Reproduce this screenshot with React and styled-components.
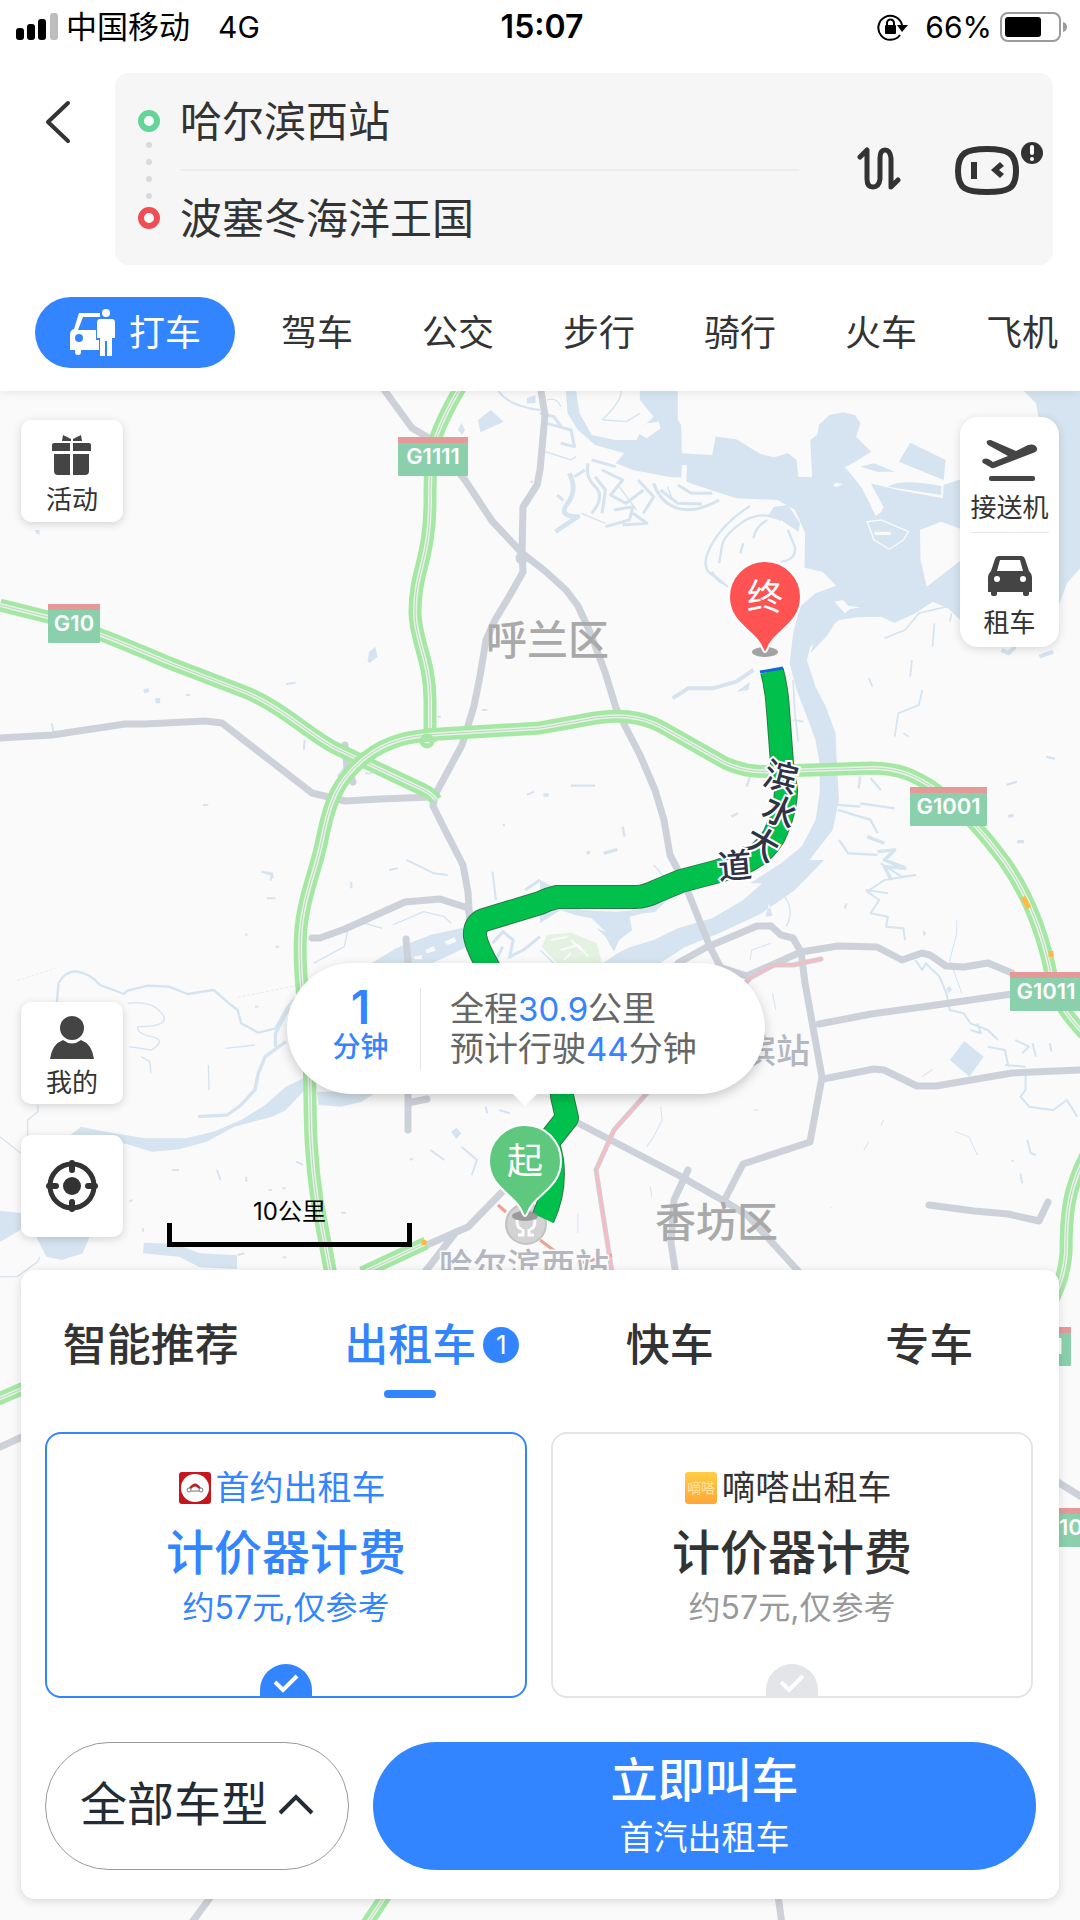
import React, { useState } from "react";
import styled, { createGlobalStyle } from "styled-components";

const modes = ["驾车", "公交", "步行", "骑行", "火车", "飞机"];
const carTabs = [
  { name: "智能推荐" },
  { name: "出租车", count: 1 },
  { name: "快车" },
  { name: "专车" },
];
const offers = [
  { id: "shouyue", name: "首约出租车", price: "计价器计费", note: "约57元,仅参考" },
  { id: "dida", name: "嘀嗒出租车", price: "计价器计费", note: "约57元,仅参考" },
];

const greyRoads = [
  "M385 391L412 428L432 440L465 480L492 521L522 553L545 571L566 590L578 606L590 632L605 672L616 708L626 728L640 755L655 790L664 820L670 855L680 874L688 892L710 947L722 970",
  "M541 391L545 415L540 470L537 485L523 507L522 553L523 572L510 595L495 620L486 640L480 676L474 706L462 745L435 795L433 806L444 828L463 865L468 892L470 925",
  "M0 738L52 735L125 724L145 724L205 721L222 723L245 741L312 793L345 801L380 799L433 797",
  "M312 938L320 938L345 929L405 902L440 899L468 908L472 925",
  "M406 939L409 975M408 1090V1130M408 1103L427 1099",
  "M678 963L705 948L757 926L771 926L781 935L793 938L801 952L805 983L822 1077L810 1142L743 1164L724 1201",
  "M719 967L747 976L801 952L838 946L877 947L902 960L922 953L930 955L946 966L964 967L988 963L1012 973",
  "M819 1024L871 1014L929 1006L1012 994",
  "M823 1079L874 1069L884 1070L917 1086L936 1086L1012 1073L1080 1070",
  "M578 1123L678 1175L724 1201L747 1215L800 1273",
  "M688 1170L674 1200L671 1243L676 1275",
  "M929 1205L974 1211L1008 1214L1039 1221L1048 1202",
  "M504 1190L468 1227L454 1233L427 1245M456 1232L425 1272",
  "M345 745L347 768L353 782",
  "M0 1447L24 1436M1056 1481L1080 1496M212 1895L190 1925M778 1895L782 1925",
];
const highways = [
  "M460 388Q444 415 436 437C430 460 430 480 430 500C430 560 415 570 415 612C415 640 430 660 430 700V742",
  "M0 605L48 617C80 624 150 655 172 664L245 692C280 706 310 735 335 748L424 790Q432 794 436 800",
  "M331 1275L317 1200C308 1140 311 1100 309 1060C306 1020 296 960 302 920C306 890 316 870 322 840C330 800 338 780 365 758C390 738 415 736 440 734L540 728L595 718C630 713 650 720 667 730L725 763C745 772 760 772 780 771L871 768C905 768 920 780 929 785C960 805 985 835 1005 862C1035 905 1047 950 1053 985C1058 1005 1070 1018 1084 1034",
  "M1086 1155C1068 1190 1066 1215 1066 1253Q1064 1280 1050 1305",
  "M426 1243L362 1273M-4 1400L24 1388M386 1895L366 1925",
];

const ROUTE =
  "M772 671Q777 690 778 710L782 763L786 790Q786 810 774 836Q762 856 740 864L719 871L681 881L657 891Q645 897 636 897H557Q548 899 540 903L484 920Q474 924 475 936Q477 948 490 970L562 1080V1096L567 1118L548 1142L552 1160Q556 1190 543 1218";

function RoadSign({ x, y, w, code }) {
  return (
    <g>
      <rect x={x} y={y} width={w} height="39" rx="1" fill="#8bd0ac" />
      <rect x={x} y={y} width={w} height="6" fill="#e59a9a" />
      <text x={x + w / 2} y={y + 27} className="sign" textAnchor="middle">
        {code}
      </text>
    </g>
  );
}

function Pin({ x, y, color, text }) {
  return (
    <g transform={`translate(${x} ${y})`}>
      <ellipse cx="0" cy="55" rx="13" ry="5" fill="#8d8d8d" opacity="0.8" />
      <path
        d="M0 -36A36 36 0 0 1 36 0C36 28 8 34 2 53Q0 57 -2 53C-8 34 -36 28 -36 0A36 36 0 0 1 0 -36Z"
        fill={color}
        stroke="#fff"
        strokeWidth="2"
      />
      <text className="pin" y="13" textAnchor="middle">
        {text}
      </text>
    </g>
  );
}

function MapCanvas() {
  return (
    <MapSvg viewBox="0 391 1080 1529" preserveAspectRatio="xMidYMin slice" aria-hidden="true">
      {/* lakes and rivers, north east */}
      <g transform="translate(540 380) scale(.3444 .3333)" fill="#d5e4f0">
        <path d="M290 33L400 33L400 120L410 135L412 220L500 225L510 170L570 178L640 222L680 232L720 220L745 240L750 290L790 292L785 180L805 165L810 135L840 105L880 97L915 105L930 130L918 170L962 215L915 245L885 262L905 285L935 325L960 375L985 400L998 382L960 310L1040 330L1170 355L1172 315L1230 295L1230 450L1165 425L1103 450L1105 540L1123 620L1230 535L1230 730L1185 685L1140 665L1090 700L1030 728L990 710L920 712L870 720L835 745L785 800L775 840L800 920L830 980L858 1060L862 1150L868 1260L850 1350L790 1430L740 1510L610 1510L700 1450L760 1400L800 1320L812 1240L812 1150L800 1080L775 1010L745 930L725 850L735 760L755 680L800 640L860 617L820 575L768 563L770 460L740 390L690 360L570 355L480 325L425 305L427 255L412 255L410 292L380 292L270 270L220 250L245 220L160 195L110 150L80 100L75 33L105 33L115 100L150 165L220 180L280 180L300 140L330 110L290 60Z" />
        <path d="M1405 33L1440 70L1450 120L1220 290V725L1508 672L1530 610L1568 565V33Z" />
        <path d="M1075 188L1178 240L1172 300L1042 245Z" />
        <path d="M680 380L720 375L755 430L750 455L700 420L660 410Z" />
        <path d="M785 820L800 770L840 700L880 690L835 765Z" />
        <path d="M570 935L610 905L605 930Z" />
        <path d="M935 245L1040 260L1050 285L1100 290L1165 318L1165 345L1010 322L960 310L915 285Z" fill="#fafafa" />
        <path d="M1010 320Q1050 295 1165 318V345Z M930 260L970 250L1030 275L980 275Z" />
        <path d="M855 665L880 660L895 678L930 682L900 688L885 700ZM285 160L310 130L345 125L350 145L310 175ZM960 378L985 380L992 395L975 408ZM850 315L860 308L880 312L860 322Z" fill="#fafafa" />
        <path d="M950 425L990 420L1070 455L1055 480L1015 508L970 480Z" stroke="#fafafa" strokeWidth="4" />
        <path d="M975 460H1000M1005 460H1015" stroke="#fafafa" strokeWidth="10" strokeLinecap="round" />
        <g fill="none" stroke="#d5e4f0" strokeWidth="7" strokeLinejoin="round">
          <path d="M610 378Q530 430 495 500T510 590L545 620M700 420Q640 390 590 425T530 490L520 550M660 420Q625 440 620 475M590 490L582 520M700 545Q745 540 740 500L720 450M500 575Q510 600 530 610" />
          <path d="M620 870L570 905L500 925L430 925L385 955" strokeWidth="12" />
          <path d="M85 280Q110 330 80 370T110 410L45 455" strokeWidth="14" />
          <path d="M140 250Q130 290 160 320T150 400M180 270L240 300L205 345L250 370L300 330M215 390L270 380L260 420L190 440M330 310Q350 370 400 385T520 360M400 315L440 340L500 340M270 400L310 430L240 435M60 190L100 200L90 150L20 130M0 100L40 110L65 145M150 240L220 260M50 345L68 362M160 290L190 330L180 400M285 300L330 350L300 400M350 330L400 370L470 372M100 290L130 270" strokeWidth="9" />
          <path d="M20 60Q50 50 60 80M180 120Q240 60 235 33M185 120L250 125L290 100M0 210L90 240L105 230M120 400L190 430M230 320L280 390M370 320L385 360" strokeWidth="4" />
          <path d="M1195 700L1190 725M1000 775L1060 750L1100 700L1180 680M1110 930L1100 975L1040 1000L1030 1070M1080 840L1075 890M1145 730L1140 800M1055 1060L1070 1070M955 895L965 920M735 900L740 1000L750 1085M735 1020L765 1025" strokeWidth="5" />
          <path d="M865 1275L930 1280M930 1190L925 1225M960 1195L990 1230M865 1290L960 1320L980 1360M868 1380L895 1420L980 1425M1355 1215L1385 1205M1470 1130L1495 1137M90 1217H160M555 1310L575 1300M600 1220L610 1190M240 1340L245 1370M930 1270L1030 1285" strokeWidth="7" />
          <path d="M980 1415L1030 1410L1000 1440L1060 1465L1000 1460L1020 1500M950 1370L1000 1390M1360 1310L1375 1305M1385 1385H1405M185 1420L225 1408M135 1418H145M10 1245H25" strokeWidth="10" />
          <path d="M1340 810L1360 820L1380 800M1450 830L1490 815" strokeWidth="12" />
        </g>
      </g>
      {/* streams, north west */}
      <g transform="translate(0 380) scale(.3444 .3333)" fill="#d5e4f0">
        <path d="M1388 120L1425 90L1462 125L1395 157ZM1330 150L1340 128L1350 150L1342 165ZM1067 845L1072 815L1090 800L1096 830L1075 848ZM102 450H115V465L104 460ZM415 930L430 924L435 935L420 940ZM450 955H465V970H452ZM1530 55L1555 45V70H1530Z" />
        <path d="M1447 33Q1480 80 1568 90M830 912L858 908M885 1080L882 1110M590 1275H605M150 1030L155 1055M1400 990H1415M1060 1180H1080M980 1190L1010 1150M760 1475L790 1480L792 1495M1130 1470L1155 1465M1530 1245L1550 1235M1460 1335H1466M1270 1010H1280M1180 1440L1260 1480L1300 1485M540 945H552M1540 305H1548" fill="none" stroke="#d5e4f0" strokeWidth="6" />
      </g>
      {/* Songhua river, west */}
      <g transform="translate(0 860) scale(.3444 .3333)" fill="#d5e4f0">
        <path d="M1075 312L1150 265L1250 225L1345 203L1355 262L1250 312Z" />
        <path d="M205 825L235 800L290 812L420 835L540 835L620 815L700 780L770 735L830 680L890 650L890 685L830 750L790 770L680 800L600 845L520 868L440 875L360 850L300 840Z" />
        <path d="M0 1052L65 1060L60 1110L0 1145ZM105 1130H260L240 1180L180 1200L135 1190ZM418 1148L510 1152L580 1180L688 1186V1227L580 1222L520 1190L415 1180ZM920 695H1095L1050 725L990 740L925 735ZM1310 815L1325 803L1340 820L1325 838Z" />
        <path d="M1235 270L1260 258L1265 272L1240 280ZM1290 245L1320 232L1325 245L1300 255ZM1200 290L1225 285V298H1205Z" fill="#fafafa" />
        <g fill="none" stroke="#d5e4f0" strokeWidth="7" strokeLinejoin="round">
          <path d="M165 428L170 370Q190 330 225 335T290 375L360 402L370 392L430 377L490 380L545 402L620 390L665 430L690 450L700 490L750 518L800 505L835 440L860 410" />
          <path d="M830 545L770 590L750 640L740 690L700 735L660 765L575 770M840 440L800 520V560" strokeWidth="10" />
          <path d="M80 830V780L110 755V735M0 830L60 880M0 1250L50 1250L110 1205L115 1190M910 310L1000 260L1010 210L1060 190L1110 205M1140 195L1230 155L1290 170L1310 190M655 565L740 555M410 590L435 605L438 640M605 615L607 690M370 430Q440 420 470 460T400 500Q395 520 440 530T440 570L375 560" strokeWidth="4" />
          <path d="M760 35L790 45L785 62M775 115H800M715 220V228M800 260H810M740 440H750M860 905L880 915M820 985H830M780 990H790M715 950V965M500 930H520M630 930L640 960M990 1058H1005M415 1105V1115M820 1192H832M690 1185L710 1180M1410 740L1415 760M1450 750L1480 760M1250 870L1290 900M1340 860L1385 900L1370 945M1190 900L1200 895M375 1025L385 1020M1430 35L1440 120M1020 65V85" strokeWidth="6" />
          <path d="M50 362L160 325M690 412L870 375" strokeWidth="2" strokeDasharray="9 5" />
        </g>
        <g fill="none" stroke="#d5e4f0" strokeWidth="9">
          <path d="M1430 250L1460 215L1490 240L1480 290L1520 270L1568 230M1525 90L1568 60M1440 300L1460 260" />
        </g>
      </g>
      {/* Songhua river, east */}
      <g transform="translate(540 860) scale(.3444 .3333)" fill="#d5e4f0">
        <path d="M5 260L20 225L90 218L165 250L180 310H50Z" fill="#e3f2e1" />
        <path d="M30 240L80 230M60 270L110 255L140 290M90 240L120 270M70 300L90 280" fill="none" stroke="#fafafa" strokeWidth="6" />
        <path d="M740 0L700 45L650 65L590 120L500 175L400 205L330 240L260 262L225 280L180 312H345L420 262L520 220L640 162L740 90L825 0ZM655 170L665 130L675 168ZM1232 543L1288 590L1247 650L1190 600ZM1180 385L1190 378L1196 390L1186 400ZM1110 210L1122 218L1115 230Z" />
        <path d="M0 60L60 90L120 150L220 155L280 150L390 100L330 160L230 240L215 275L190 230L140 180L60 150L0 190Z" />
        <path d="M260 170L300 160L340 155L270 225ZM100 165L150 175L190 215L130 190ZM30 170L90 160L110 200L60 200Z" fill="#fafafa" />
        <g fill="none" stroke="#d5e4f0" strokeWidth="6" strokeLinejoin="round">
          <path d="M710 110Q740 150 715 200M0 270L40 310M330 15L360 50" strokeWidth="4" />
          <path d="M990 10L1050 50L1090 45L1000 60L950 95L985 120L960 160L1010 170L1005 200L1055 205L1060 240M945 90L1010 100M1000 0L1060 20M1090 300L1110 330L1120 310L1160 350L1180 400L1190 450L1230 460L1250 490L1300 510L1330 540M1250 510L1280 520L1270 490M1300 560L1350 570L1360 620M1350 615L1410 620M1410 640V690L1395 710L1420 740L1450 745L1490 750L1530 720L1560 770M1380 540L1420 560L1400 580M1430 550L1440 590M1480 550L1485 575M890 130L885 145M1415 840L1425 880L1440 885M1370 905L1375 900M1395 940L1400 970" />
          <path d="M350 740L355 780L330 830L310 860M620 750H635M940 870L955 845M990 795L998 780M1110 650L1140 628M1205 815L1245 830L1270 885M675 400L685 450M320 980L325 1010M110 1060V1120M610 300L615 270L670 250M1210 180V220L1190 300L1225 400M845 1045V1040" strokeWidth="3" />
        </g>
      </g>

      <g fill="none" stroke="#cdd1d9" strokeWidth="7" strokeLinejoin="round" strokeLinecap="round">
        {greyRoads.map((d) => (
          <path key={d} d={d} />
        ))}
        <path d="M821 959L793 965H774L750 978L647 1093L614 1130L596 1170L612 1272" strokeWidth="5" />
        <path d="M821 959L793 965H774L750 978L647 1093L614 1130L596 1170L612 1272" stroke="#f6bcc3" strokeWidth="3" />
        <circle cx="522" cy="558" r="3" />
      </g>
      <path d="M498 1205L506 1212M540 1240L556 1252M577 1264L612 1255" stroke="#eaa48e" strokeWidth="3" fill="none" />
      {highways.map((d) => (
        <g key={d} fill="none">
          <path d={d} stroke="#a4e8a4" strokeWidth="13" />
          <path d={d} stroke="#e4f4e4" strokeWidth="4" />
          <path d={d} stroke="#c3cfc6" strokeWidth="1" />
        </g>
      ))}
      <circle cx="427" cy="741" r="5" fill="none" stroke="#a4e8a4" strokeWidth="5" />
      <path d="M1023 897L1029 908M1051 951V957M424 1240V1245" stroke="#ffba45" strokeWidth="5" />

      <text className="district" x="486" y="655">呼兰区</text>
      <text className="district" x="655" y="1237">香坊区</text>
      <text className="station" x="810" y="1063" textAnchor="end">滨站</text>
      <text className="station" x="439" y="1278">哈尔滨西站</text>
      <g transform="translate(526 1224)">
        <circle r="20" fill="#d3d3d3" stroke="#c2c2c2" strokeWidth="2" />
        <path d="M-9 -4Q-9 5 -4 5M9 -4Q9 5 4 5M-3 5V11H-8M3 5V11H8" fill="none" stroke="#fff" strokeWidth="3" />
      </g>

      <path d={ROUTE} fill="none" stroke="#2b7a45" strokeWidth="24" strokeLinejoin="round" />
      <path d={ROUTE} fill="none" stroke="#02c04c" strokeWidth="22" strokeLinejoin="round" />
      <path d="M760 672L783 668" stroke="#1565d8" strokeWidth="3" />
      <g className="road">
        <text transform="translate(781 777) rotate(15)" x="-17" y="12">滨</text>
        <text transform="translate(780 812) rotate(25)" x="-17" y="12">水</text>
        <text transform="translate(762 844) rotate(30)" x="-17" y="12">大</text>
        <text transform="translate(735 866) rotate(-5)" x="-17" y="12">道</text>
      </g>

      <RoadSign x={398} y={437} w={70} code="G1111" />
      <RoadSign x={48} y={604} w={52} code="G10" />
      <RoadSign x={910} y={787} w={77} code="G1001" />
      <RoadSign x={1010} y={972} w={72} code="G1011" />
      <RoadSign x={1001} y={1327} w={70} code="G1111" />
      <RoadSign x={1037} y={1508} w={70} code="G1011" />
      <Pin x={765} y={597} color="#ff5252" text="终" />
      <Pin x={525} y={1161} color="#5ec87e" text="起" />
    </MapSvg>
  );
}

function ShouyueLogo() {
  return (
    <svg width="32" height="32" viewBox="0 0 32 32" aria-hidden="true">
      <rect width="32" height="32" rx="3" fill="#c5161d" />
      <circle cx="16" cy="16" r="14" fill="#fff" />
      <path d="M10 16Q16 7 22 16L20 17Q16 12 12 17Z" fill="#b8252b" />
      <path d="M12 19H20" stroke="#777" strokeWidth="1" />
      <circle cx="10" cy="18" r="2" fill="#fff" stroke="#777" />
      <circle cx="22" cy="18" r="2" fill="#fff" stroke="#777" />
    </svg>
  );
}

function DidaLogo() {
  return (
    <svg width="32" height="32" viewBox="0 0 32 32" aria-hidden="true">
      <defs>
        <linearGradient id="dida" x1="0" y1="0" x2="0" y2="1">
          <stop offset="0" stopColor="#ffcd45" />
          <stop offset="1" stopColor="#ffa638" />
        </linearGradient>
      </defs>
      <rect width="32" height="32" rx="3" fill="url(#dida)" />
      <text x="16" y="21" textAnchor="middle" fontSize="14" fill="#ffe6a0">嘀嗒</text>
    </svg>
  );
}

export default function App() {
  const [carTab, setCarTab] = useState(1);
  const [offer, setOffer] = useState("shouyue");
  const [from, setFrom] = useState("哈尔滨西站");
  const [to, setTo] = useState("波塞冬海洋王国");

  const swap = () => {
    setFrom(to);
    setTo(from);
  };

  return (
    <Page>
      <GlobalStyle />
      <Header>
        <StatusBar>
          <StatusSide>
            <svg width="42" height="28" viewBox="0 0 42 28">
              <rect x="0" y="15" width="8" height="12" rx="3" />
              <rect x="11" y="11" width="8" height="16" rx="3" />
              <rect x="22" y="6" width="8" height="21" rx="3" />
              <rect x="34" y="0" width="8" height="27" rx="3" fill="#bdbdbd" />
            </svg>
            <Carrier>中国移动</Carrier>
            <span>4G</span>
          </StatusSide>
          <Clock>15:07</Clock>
          <StatusSide $end>
            <svg width="32" height="28" viewBox="0 0 32 28">
              <path d="M23 22A12 12 0 1 1 25 12" fill="none" stroke="#000" strokeWidth="2" />
              <path d="M20 12H31L25 19Z" />
              <rect x="8" y="12" width="11" height="9" rx="1" />
              <path d="M10 13V10A3 3 0 0 1 17 10V13" fill="none" stroke="#000" strokeWidth="2" />
            </svg>
            <Percent>66%</Percent>
            <svg width="68" height="30" viewBox="0 0 68 30">
              <rect x="1" y="1" width="59" height="28" rx="7" fill="none" stroke="#9b9b9b" strokeWidth="2" />
              <rect x="5" y="5" width="36" height="20" rx="3" />
              <path d="M63 10Q67 11 67 15T63 20Z" fill="#9b9b9b" />
            </svg>
          </StatusSide>
        </StatusBar>

        <SearchRow>
          <Back type="button" aria-label="返回">
            <svg width="28" height="44" viewBox="0 0 28 44">
              <path d="M25 3L5 22L25 41" />
            </svg>
          </Back>
          <SearchBox>
            <svg width="24" height="192" viewBox="0 0 24 192">
              <circle cx="12" cy="48" r="8" fill="#fff" stroke="#65d498" strokeWidth="6" />
              <circle cx="12" cy="145" r="8" fill="#fff" stroke="#ef4f54" strokeWidth="6" />
              <g fill="#dadada">
                <circle cx="12" cy="72" r="3" />
                <circle cx="12" cy="89" r="3" />
                <circle cx="12" cy="106" r="3" />
                <circle cx="12" cy="123" r="3" />
              </g>
            </svg>
            <Fields>
              <Field aria-label="起点" value={from} onChange={(e) => setFrom(e.target.value)} />
              <Field aria-label="终点" value={to} onChange={(e) => setTo(e.target.value)} />
            </Fields>
            <IconButton type="button" aria-label="交换起终点" onClick={swap}>
              <svg width="44" height="46" viewBox="0 0 44 46">
                <path
                  d="M3 11L10 4V33Q10 41 16 41T23 33V12Q23 4 28 4T34 12V41L41 34"
                  fill="none"
                  stroke="#333"
                  strokeWidth="5"
                  strokeLinecap="round"
                  strokeLinejoin="round"
                />
              </svg>
            </IconButton>
            <IconButton type="button" aria-label="语音助手">
              <svg width="92" height="60" viewBox="0 0 92 60">
                <path d="M33 10C54 10 62 14 62 32S54 53 33 53S4 50 4 32S12 10 33 10Z" fill="none" stroke="#333" strokeWidth="6" />
                <path d="M17 23H23V40H17Z" fill="#333" />
                <path d="M46 23L50 27L45 31L50 35L46 39L37 31Z" fill="#333" />
                <circle cx="78" cy="14" r="11" fill="#333" />
                <path d="M78 8V14" stroke="#fff" strokeWidth="4" strokeLinecap="round" />
                <circle cx="78" cy="20" r="2" fill="#fff" />
              </svg>
            </IconButton>
          </SearchBox>
        </SearchRow>

        <ModeNav>
          <ModeActive type="button">
            <svg width="48" height="48" viewBox="0 0 48 48" fill="#fff">
              <circle cx="37" cy="4" r="4" />
              <path d="M31 10H43Q46 10 46 14V29H43V47H38V32H36V47H31V29H28V14Q28 10 31 10Z" />
              <path d="M10 4H31V8H14L9 21H27V31H30V41H12V43Q12 46 9 46T6 43V41H1V26Q1 21 5 20Z" />
              <circle cx="10" cy="29" r="4" fill="#3385ff" />
            </svg>
            打车
          </ModeActive>
          {modes.map((m) => (
            <Mode key={m} type="button">
              {m}
            </Mode>
          ))}
        </ModeNav>
      </Header>

      <MapArea>
        <MapCanvas />
        <Bubble>
          <Wait>
            <b>1</b>
            <span>分钟</span>
          </Wait>
          <Trip>
            <p>
              全程<em>30.9</em>公里
            </p>
            <p>
              预计行驶<em>44</em>分钟
            </p>
          </Trip>
        </Bubble>

        <Overlay>
          <ToolColumn>
            <Tool type="button">
              <svg width="40" height="42" viewBox="0 0 40 42" fill="#444">
                <path d="M11 0L19 4V6H10ZM29 0L21 4V6H30ZM0 10Q0 8 2 8H18V16H0ZM21 8H37Q39 8 39 10V16H21ZM2 19H18V40H6Q2 40 2 36ZM21 19H37V36Q37 40 33 40H21Z" />
              </svg>
              活动
            </Tool>
            <ToolGroup>
              <Tool type="button">
                <svg width="46" height="44" viewBox="0 0 46 44" fill="#444">
                  <ellipse cx="23" cy="12" rx="12" ry="12" />
                  <path d="M1 43Q3 28 14 24Q23 31 32 24Q43 28 45 43Z" />
                </svg>
                我的
              </Tool>
              <LocateTool type="button" aria-label="定位">
                <svg width="52" height="52" viewBox="0 0 52 52">
                  <circle cx="26" cy="26" r="22" fill="none" stroke="#333" strokeWidth="5" />
                  <circle cx="26" cy="26" r="9" fill="#333" />
                  <path d="M26 3V10M26 42V49M3 26H10M42 26H49" stroke="#333" strokeWidth="6" strokeLinecap="round" />
                </svg>
              </LocateTool>
            </ToolGroup>
          </ToolColumn>
          <Scale>
            <span>10公里</span>
          </Scale>
          <RightPanel>
            <PanelButton type="button">
              <svg width="56" height="42" viewBox="0 0 56 42" fill="#444">
                <path d="M5 1Q8 -1 11 1L34 11L46 5Q53 3 55 8Q56 11 51 13L12 28Q10 29 8 27L1 23Q-1 20 2 19Q5 17 11 22L26 16L6 5Q4 3 5 1Z" />
                <rect x="7" y="36" width="46" height="5" rx="2" />
              </svg>
              接送机
            </PanelButton>
            <PanelButton type="button">
              <svg width="46" height="42" viewBox="0 0 46 42">
                <path d="M12 1H34Q37 1 38 4L42 16Q45 19 45 22V37H42V39Q42 41 39 41T36 39V37H10V39Q10 41 7 41T4 39V37H1V22Q1 19 4 16L8 4Q9 1 12 1Z" fill="#444" />
                <path d="M13 5H33L36 16H10Z" fill="#fff" />
                <circle cx="10" cy="24" r="3" fill="#fff" />
                <circle cx="36" cy="24" r="3" fill="#fff" />
              </svg>
              租车
            </PanelButton>
          </RightPanel>
        </Overlay>

        <Sheet>
          <CarTabs role="tablist">
            {carTabs.map((tab, i) => (
              <CarTab key={tab.name} type="button" role="tab" aria-selected={i === carTab} $active={i === carTab} onClick={() => setCarTab(i)}>
                <TabText>
                  {tab.name}
                  {tab.count && <Count>{tab.count}</Count>}
                </TabText>
              </CarTab>
            ))}
          </CarTabs>
          <Offers>
            {offers.map((o) => (
              <Offer key={o.id} $active={o.id === offer}>
                <input type="radio" name="offer" checked={o.id === offer} onChange={() => setOffer(o.id)} />
                <OfferName>
                  {o.id === "shouyue" ? <ShouyueLogo /> : <DidaLogo />}
                  {o.name}
                </OfferName>
                <OfferPrice>{o.price}</OfferPrice>
                <OfferNote $active={o.id === offer}>{o.note}</OfferNote>
                <Tick viewBox="0 0 52 32" $active={o.id === offer}>
                  <path d="M0 32V26A26 26 0 0 1 52 26V32Z" />
                  <path d="M15 18L23 26L37 12" fill="none" stroke="#fff" strokeWidth="4" />
                </Tick>
              </Offer>
            ))}
          </Offers>
          <Actions>
            <AllTypes type="button">
              全部车型
              <svg width="36" height="22" viewBox="0 0 36 22">
                <path d="M2 20L18 4L34 20" fill="none" stroke="#222b36" strokeWidth="4" />
              </svg>
            </AllTypes>
            <CallCar type="button">
              <strong>立即叫车</strong>
              <span>首汽出租车</span>
            </CallCar>
          </Actions>
        </Sheet>
      </MapArea>
    </Page>
  );
}

const GlobalStyle = createGlobalStyle`
  * {
    box-sizing: border-box;
  }
  body {
    margin: 0;
    background: #fff;
  }
  body, button, input {
    font-family: Inter, "Noto Sans CJK SC", sans-serif;
    color: #333;
  }
  button {
    border: 0;
    padding: 0;
    background: none;
    cursor: pointer;
  }
  svg {
    display: block;
    flex: none;
  }
`;

const Page = styled.div`
  display: flex;
  flex-direction: column;
  min-height: 100vh;
`;

const Header = styled.header`
  position: relative;
  z-index: 2;
  padding-bottom: 23px;
  background: #fff;
  box-shadow: 0 2px 8px rgba(0, 0, 0, 0.08);
`;

const StatusBar = styled.div`
  display: flex;
  align-items: center;
  height: 53px;
  padding: 0 12px 0 16px;
  color: #000;
  font-size: 30px;
  line-height: 32px;
`;

const StatusSide = styled.div`
  display: flex;
  flex: 1;
  align-items: center;
  justify-content: ${(p) => (p.$end ? "flex-end" : "flex-start")};
`;

const Carrier = styled.span`
  margin: 0 28px 0 8px;
  font-size: 31px;
`;

const Clock = styled.div`
  font-size: 32px;
  font-weight: 600;
`;

const Percent = styled.span`
  margin: 0 8px 0 16px;
`;

const SearchRow = styled.div`
  display: flex;
  align-items: flex-start;
  padding: 20px 27px 0 43px;
`;

const Back = styled.button`
  width: 72px;
  height: 98px;
  path {
    fill: none;
    stroke: #333;
    stroke-width: 4;
    stroke-linecap: round;
    stroke-linejoin: round;
  }
`;

const SearchBox = styled.div`
  display: flex;
  flex: 1;
  align-items: center;
  padding: 0 7px 0 22px;
  border-radius: 14px;
  background: #f6f6f6;
`;

const Fields = styled.div`
  display: flex;
  flex: 1;
  flex-direction: column;
  margin: 0 58px 0 19px;
`;

const Field = styled.input`
  width: 100%;
  height: 96px;
  padding: 0 0 6px;
  border: 0;
  outline: 0;
  background: none;
  font-size: 42px;
  & + & {
    border-top: 2px solid #ededed;
  }
`;

const IconButton = styled.button`
  & + & {
    margin-left: 53px;
  }
`;

const ModeNav = styled.nav`
  display: flex;
  align-items: center;
  justify-content: space-between;
  padding: 32px 22px 0 35px;
`;

const Mode = styled.button`
  font-size: 36px;
  line-height: 52px;
`;

const ModeActive = styled(Mode)`
  display: flex;
  align-items: center;
  justify-content: center;
  gap: 12px;
  width: 200px;
  height: 71px;
  margin-right: -23px;
  border-radius: 36px;
  background: #3385ff;
  color: #fff;
`;

const MapArea = styled.main`
  position: relative;
  display: flex;
  flex: 1;
  flex-direction: column;
  overflow: hidden;
  background: #fafafa;
`;

const MapSvg = styled.svg`
  position: absolute;
  inset: 0;
  width: 100%;
  height: 100%;
  .sign {
    fill: #fff;
    font-size: 22px;
    font-weight: 600;
  }
  .district {
    fill: #a9a9a9;
    font-size: 41px;
    font-weight: 500;
  }
  .station {
    fill: #b4b7bf;
    font-size: 34px;
    font-weight: 500;
    paint-order: stroke;
    stroke: #fafafa;
    stroke-width: 3px;
  }
  .road text {
    fill: #2e3348;
    font-size: 34px;
    font-weight: 500;
    paint-order: stroke;
    stroke: #fff;
    stroke-width: 4px;
  }
  .pin {
    fill: #fff;
    font-size: 36px;
  }
`;

const Bubble = styled.div`
  position: absolute;
  top: 572px;
  left: calc(50% - 253px);
  display: flex;
  align-items: center;
  width: 478px;
  height: 131px;
  border-radius: 66px;
  background: #fff;
  box-shadow: 0 4px 12px rgba(0, 0, 0, 0.2);
  &::after {
    content: "";
    position: absolute;
    top: 100%;
    left: 50%;
    margin-left: -13px;
    border: 12px solid transparent;
    border-top-color: #fff;
    border-bottom: 0;
  }
`;

const Wait = styled.div`
  display: flex;
  flex-direction: column;
  align-items: center;
  width: 134px;
  height: 82px;
  padding-left: 14px;
  border-right: 1px solid #e6e6e6;
  color: #3385ff;
  font-size: 28px;
  font-weight: 500;
  line-height: 42px;
  b {
    font-size: 46px;
    font-weight: 600;
    line-height: 38px;
  }
`;

const Trip = styled.div`
  padding-left: 29px;
  color: #666;
  font-size: 34px;
  line-height: 40px;
  white-space: nowrap;
  p {
    margin: 0;
  }
  em {
    color: #3385ff;
    font-size: 33px;
    font-style: normal;
  }
`;

const Overlay = styled.div`
  display: flex;
  flex: 1;
  padding: 29px 21px 33px;
`;

const ToolColumn = styled.div`
  position: relative;
  display: flex;
  flex-direction: column;
  justify-content: space-between;
`;

const ToolGroup = styled.div`
  display: grid;
  gap: 31px;
`;

const Tool = styled.button`
  display: flex;
  flex-direction: column;
  align-items: center;
  justify-content: center;
  gap: 7px;
  width: 102px;
  height: 102px;
  padding-top: 8px;
  border-radius: 10px;
  background: #fff;
  box-shadow: 0 2px 8px rgba(0, 0, 0, 0.16);
  font-size: 26px;
  line-height: 32px;
`;

const LocateTool = styled(Tool)`
  padding-top: 0;
`;

const Scale = styled.div`
  position: relative;
  align-self: flex-end;
  width: 245px;
  margin: 0 auto -10px 44px;
  border: solid #000;
  border-width: 0 5px 5px;
  height: 24px;
  span {
    position: absolute;
    bottom: 16px;
    left: 0;
    width: 100%;
    color: #000;
    font-size: 24px;
    line-height: 28px;
    text-align: center;
  }
`;

const RightPanel = styled.div`
  position: relative;
  display: flex;
  flex-direction: column;
  align-self: flex-start;
  width: 99px;
  height: 230px;
  margin-top: -3px;
  border-radius: 18px;
  background: #fff;
  box-shadow: 0 2px 10px rgba(0, 0, 0, 0.14);
`;

const PanelButton = styled.button`
  display: flex;
  flex: 1;
  flex-direction: column;
  align-items: center;
  justify-content: flex-end;
  gap: 10px;
  margin: 0 10px;
  padding-bottom: 8px;
  font-size: 26px;
  line-height: 32px;
  white-space: nowrap;
  & + & {
    border-top: 1px solid #e8e8e8;
  }
`;

const Sheet = styled.section`
  position: relative;
  margin: 0 21px 21px;
  padding-bottom: 29px;
  border-radius: 14px;
  background: #fff;
  box-shadow: 0 2px 10px rgba(0, 0, 0, 0.14);
`;

const CarTabs = styled.div`
  display: grid;
  grid-template-columns: repeat(4, 1fr);
`;

const CarTab = styled.button`
  display: flex;
  flex-direction: column;
  align-items: center;
  height: 162px;
  padding-top: 43px;
  color: ${(p) => (p.$active ? "#3385ff" : "#333")};
  font-size: 44px;
  font-weight: 500;
  line-height: 64px;
  &::after {
    content: "";
    width: 52px;
    height: 8px;
    margin-top: 13px;
    border-radius: 4px;
    background: ${(p) => (p.$active ? "#3385ff" : "transparent")};
  }
`;

const TabText = styled.span`
  position: relative;
`;

const Count = styled.span`
  position: absolute;
  top: 14px;
  left: 100%;
  width: 36px;
  height: 36px;
  margin-left: 7px;
  border-radius: 50%;
  background: #3385ff;
  color: #fff;
  font-size: 26px;
  font-weight: 400;
  line-height: 36px;
  text-align: center;
`;

const Offers = styled.div`
  display: grid;
  grid-template-columns: 1fr 1fr;
  gap: 24px;
  padding: 0 26px 0 24px;
`;

const Offer = styled.label`
  display: flex;
  flex-direction: column;
  align-items: center;
  padding-top: 34px;
  border: 2px solid ${(p) => (p.$active ? "#3385ff" : "#e3e5e8")};
  border-radius: 16px;
  color: ${(p) => (p.$active ? "#3385ff" : "#333")};
  cursor: pointer;
  input {
    position: absolute;
    opacity: 0;
  }
`;

const OfferName = styled.span`
  display: flex;
  align-items: center;
  gap: 5px;
  padding-right: 8px;
  font-size: 34px;
  line-height: 40px;
`;

const OfferPrice = styled.strong`
  margin-top: 13px;
  font-size: 48px;
  font-weight: 500;
  line-height: 64px;
`;

const OfferNote = styled.span`
  margin-top: 3px;
  color: ${(p) => (p.$active ? "#3385ff" : "#999")};
  font-size: 32px;
  line-height: 40px;
`;

const Tick = styled.svg`
  width: 52px;
  height: 32px;
  margin-top: 36px;
  fill: ${(p) => (p.$active ? "#3385ff" : "#e3e5e8")};
`;

const Actions = styled.div`
  display: flex;
  gap: 24px;
  padding: 44px 23px 0 24px;
`;

const AllTypes = styled.button`
  display: flex;
  align-items: center;
  justify-content: center;
  gap: 10px;
  width: 304px;
  height: 128px;
  border: 1px solid #999;
  border-radius: 64px;
  color: #222b36;
  font-size: 47px;
  line-height: 64px;
  padding-bottom: 4px;
`;

const CallCar = styled.button`
  display: flex;
  flex: 1;
  flex-direction: column;
  align-items: center;
  justify-content: center;
  padding-bottom: 2px;
  border-radius: 64px;
  background: #3385ff;
  color: #fff;
  font-size: 34px;
  line-height: 48px;
  strong {
    margin-bottom: 2px;
    font-size: 47px;
    font-weight: 500;
    line-height: 64px;
  }
`;
